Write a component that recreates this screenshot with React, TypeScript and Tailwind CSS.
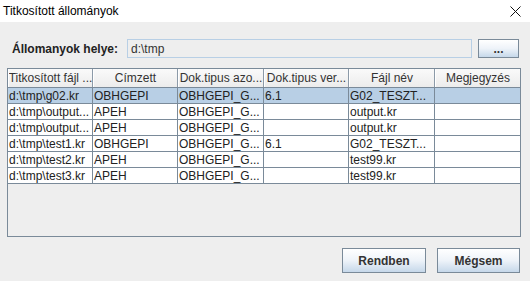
const columns = [
  { title: "Titkosított fájl ...", width: "w-[85px]" },
  { title: "Címzett", width: "w-[85px]" },
  { title: "Dok.tipus azo...", width: "w-[86px]" },
  { title: "Dok.tipus ver...", width: "w-[85px]" },
  { title: "Fájl név", width: "w-[86px]" },
  { title: "Megjegyzés", width: "w-[85px]" },
];

const rows = [
  ["d:\\tmp\\g02.kr", "OBHGEPI", "OBHGEPI_G...", "6.1", "G02_TESZT...", ""],
  ["d:\\tmp\\output...", "APEH", "OBHGEPI_G...", "", "output.kr", ""],
  ["d:\\tmp\\output...", "APEH", "OBHGEPI_G...", "", "output.kr", ""],
  ["d:\\tmp\\test1.kr", "OBHGEPI", "OBHGEPI_G...", "6.1", "G02_TESZT...", ""],
  ["d:\\tmp\\test2.kr", "APEH", "OBHGEPI_G...", "", "test99.kr", ""],
  ["d:\\tmp\\test3.kr", "APEH", "OBHGEPI_G...", "", "test99.kr", ""],
];

function OceanButton({ label, className }: { label: string; className: string }) {
  return (
    <button
      className={`flex items-center justify-center border border-[#7a8a99] bg-gradient-to-b from-[#ffffff] via-[#eef3f9] to-[#c6d8ea] text-[12px] font-bold text-[#333333] ${className}`}
    >
      {label}
    </button>
  );
}

export default function App() {
  return (
    <div className="flex h-[281px] w-[530px] flex-col overflow-hidden bg-[#eeeeee] font-['Liberation_Sans',Arial,sans-serif] text-[12px] text-[#222222]">
      {/* window title */}
      <div className="flex h-[22px] shrink-0 items-center justify-between bg-white pl-[3px] pr-[9px]">
        <span className="text-[12px] text-black">Titkosított állományok</span>
        <svg width="11" height="11" viewBox="0 0 11 11" className="mt-[1px]">
          <path d="M0.5 0.5 L10.5 10.5 M10.5 0.5 L0.5 10.5" stroke="#111" strokeWidth="1" />
        </svg>
      </div>

      <div className="flex flex-1 flex-col pl-[7px] pr-[10px]">
        {/* location row */}
        <div className="mt-[17px] flex h-[19px] items-center">
          <span className="ml-[5px] w-[115px] text-[12px] font-bold text-[#222222]">Állomanyok helye:</span>
          <div className="flex h-[19px] w-[345px] items-center border border-[#b8cfe5] bg-[#eeeeee] pl-[3px] text-[#333333]">
            d:\tmp
          </div>
          <OceanButton label="..." className="ml-[6px] h-[19px] w-[41px] leading-none" />
        </div>

        {/* table */}
        <div className="mt-[10px] flex h-[169px] w-[514px] flex-col border border-[#7a8a99] bg-[#eeeeee]">
          <div className="flex h-[19px] border-b border-[#7a8a99]">
            {columns.map((col, i) => (
              <div
                key={col.title}
                className={`${col.width} flex items-center justify-center overflow-hidden whitespace-nowrap border-l border-white bg-gradient-to-b from-[#fafafa] to-[#ececec] text-[#333333] ${i < columns.length - 1 ? "border-r border-r-[#8c9aa8]" : ""}`}
              >
                {col.title}
              </div>
            ))}
          </div>
          {rows.map((row, r) => (
            <div key={r} className={`flex h-[16px] border-b border-[#7a8a99] ${r === 0 ? "bg-[#b8cfe5]" : "bg-white"}`}>
              {row.map((cell, c) => (
                <div
                  key={c}
                  className={`${columns[c].width} flex items-center overflow-hidden whitespace-nowrap pl-[1px] leading-none ${c < row.length - 1 ? "border-r border-[#7a8a99]" : ""}`}
                >
                  {cell}
                </div>
              ))}
            </div>
          ))}
        </div>

        {/* dialog buttons */}
        <div className="mt-[11px] flex justify-end gap-[11px]">
          <OceanButton label="Rendben" className="h-[25px] w-[84px]" />
          <OceanButton label="Mégsem" className="h-[25px] w-[83px]" />
        </div>
      </div>
    </div>
  );
}
